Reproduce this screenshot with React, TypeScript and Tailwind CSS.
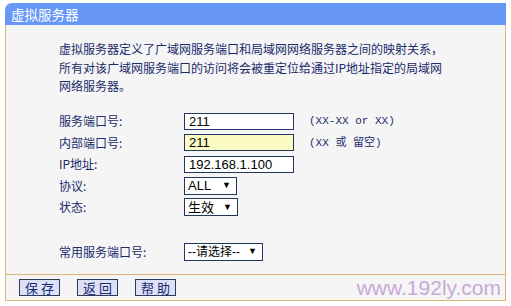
const cjk = { fontFamily: '"SimSun", "Noto Sans CJK SC", sans-serif' };
const mono = { fontFamily: '"Liberation Mono", "Noto Sans CJK SC", monospace' };
const arial = { fontFamily: '"Liberation Sans", "Noto Sans CJK SC", sans-serif' };

function Select({ value, width, small }: { value: string; width: string; small?: boolean }) {
  return (
    <div
      className={`${width} h-[18px] flex items-center justify-between border border-[#24365e] bg-white pl-[3px] pr-[5px] ${small ? "text-[12px]" : "text-[13px]"} text-black`}
      style={arial}
    >
      <span className="leading-none">{value}</span>
      <span className="text-[9px] leading-none">▼</span>
    </div>
  );
}

function Input({ value, yellow }: { value: string; yellow?: boolean }) {
  return (
    <div
      className={`w-[110px] h-[17px] flex items-center border border-[#24365e] px-[4px] text-[13px] text-black ${yellow ? "bg-[#fbfcc4]" : "bg-white"}`}
      style={arial}
    >
      {value}
    </div>
  );
}

function Row({ label, children, hint }: { label: string; children: React.ReactNode; hint?: string }) {
  return (
    <div className="h-[21.5px] flex items-center">
      <div className="w-[125px] text-[12px]" style={cjk}>{label}</div>
      {children}
      {hint && (
        <div className="ml-[15px] text-[11px]" style={mono}>{hint}</div>
      )}
    </div>
  );
}

export default function App() {
  return (
    <div className="w-[511px] h-[306px] bg-white pl-[5px] pt-[3px] text-[#1a2a6c]">
      <div className="w-[501px]">
        <div className="h-[22px] bg-[#6797f7] rounded-tl-[7px] flex items-center pl-[6px]">
          <span className="text-white text-[13.5px]" style={cjk}>虚拟服务器</span>
        </div>
        <div className="h-[249px] bg-[#f5f5f5] border-x border-[#dfb47a] pl-[53px] pt-[15px]">
          <p className="text-[12px] leading-[18.5px]" style={cjk}>
            虚拟服务器定义了广域网服务端口和局域网网络服务器之间的映射关系，<br />
            所有对该广域网服务端口的访问将会被重定位给通过IP地址指定的局域网<br />
            网络服务器。
          </p>
          <div className="mt-[15px]">
            <Row label="服务端口号:" hint="(XX-XX or XX)">
              <Input value="211" />
            </Row>
            <Row label="内部端口号:" hint="(XX 或 留空)">
              <Input value="211" yellow />
            </Row>
            <Row label="IP地址:">
              <Input value="192.168.1.100" />
            </Row>
            <Row label="协议:">
              <Select value="ALL" width="w-[53px]" />
            </Row>
            <Row label="状态:">
              <Select value="生效" width="w-[54px]" />
            </Row>
            <div className="mt-[23px]">
              <Row label="常用服务端口号:">
                <Select value="--请选择--" width="w-[79px]" small />
              </Row>
            </div>
          </div>
        </div>
        <div className="h-[27px] bg-[#f5f5f5] border border-[#dfb47a] flex items-center justify-between pl-[13px] pr-[4px]">
          <div className="flex gap-[17px]">
            {["保 存", "返 回", "帮 助"].map((t) => (
              <button
                key={t}
                className="w-[41px] h-[17px] bg-[#dde1f7] border border-[#2c3a5e] text-[13px] leading-none text-[#1a2a6c] flex items-center justify-center whitespace-pre"
                style={cjk}
              >
                {t}
              </button>
            ))}
          </div>
          <span className="text-[21px] leading-none text-[#c7a9d8]" style={arial}>www.192ly.com</span>
        </div>
      </div>
    </div>
  );
}
